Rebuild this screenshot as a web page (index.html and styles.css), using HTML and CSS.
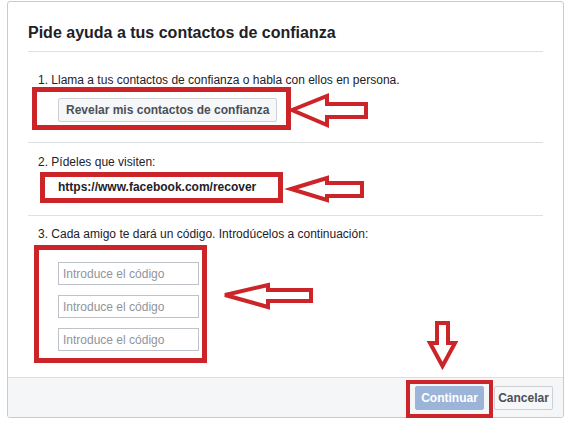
FILE: index.html
```html
<!DOCTYPE html>
<html lang="es">
<head>
<meta charset="utf-8">
<title>Pide ayuda a tus contactos de confianza</title>
<link rel="stylesheet" href="styles.css">
</head>
<body>
<div class="dialog">
  <div class="dialog-header">
    <h2 class="dialog-title">Pide ayuda a tus contactos de confianza</h2>
  </div>
  <div class="dialog-body">
    <div class="step">
      <p class="step-text">1. Llama a tus contactos de confianza o habla con ellos en persona.</p>
      <div class="step-content">
        <button class="btn btn-default" type="button">Revelar mis contactos de confianza</button>
      </div>
    </div>
    <div class="step">
      <p class="step-text">2. Pídeles que visiten:</p>
      <div class="step-content">
        <span class="recover-link">https://www.facebook.com/recover</span>
      </div>
    </div>
    <div class="step step-last">
      <p class="step-text">3. Cada amigo te dará un código. Introdúcelos a continuación:</p>
      <div class="step-content code-list">
        <input class="code-input" type="text" placeholder="Introduce el código">
        <input class="code-input" type="text" placeholder="Introduce el código">
        <input class="code-input" type="text" placeholder="Introduce el código">
      </div>
    </div>
  </div>
  <div class="dialog-footer">
    <button class="btn btn-primary btn-continue" type="button" disabled>Continuar</button>
    <button class="btn btn-default btn-cancel" type="button">Cancelar</button>
  </div>
</div>

<!-- red hand-drawn markers layered over the dialog -->
<svg class="markers" width="571" height="421" viewBox="0 0 571 421" aria-hidden="true">
  <g fill="none" stroke="#cc2529" stroke-width="5">
    <rect x="34.5" y="89.5" width="254" height="38"/>
    <rect x="42.5" y="174.5" width="238" height="26"/>
    <rect x="36.5" y="247.5" width="168" height="113"/>
  </g>
  <rect x="408" y="382" width="83" height="34" fill="none" stroke="#cc2529" stroke-width="4"/>
  <g fill="#fff" stroke="#cc2529" stroke-width="4" stroke-linejoin="miter">
    <polygon points="292,110 327,96 327,104 366,104 366,117 327,117 327,125"/>
    <polygon points="291,189 327,178 327,183 362,183 362,196 327,196 327,200"/>
    <polygon points="225,295 268,285 268,290 311,290 311,301 268,301 268,307"/>
    <polygon points="437,323 448,323 448,343 455,343 442.5,366 430,343 437,343"/>
  </g>
</svg>
</body>
</html>
```

FILE: styles.css
```css
html, body {
  margin: 0;
  padding: 0;
  background: #fff;
}

body {
  font-family: "Liberation Sans", Arial, Helvetica, sans-serif;
  font-size: 12px;
  color: #1d2129;
  width: 571px;
  height: 421px;
  overflow: hidden;
  position: relative;
}

.dialog {
  box-sizing: border-box;
  width: 557px;
  height: 417px;
  margin: 1px 0 0 7px;
  border: 1px solid #c9cbcf;
  border-radius: 3px;
  display: flex;
  flex-direction: column;
  overflow: hidden;
}

.dialog-header {
  margin: 0 20px;
  padding: 21px 0 8px;
  border-bottom: 1px solid #dddfe2;
}

.dialog-title {
  margin: 0;
  font-size: 16px;
  line-height: 20px;
  font-weight: bold;
  color: #1d2129;
}

.dialog-body {
  flex: 1;
  padding-top: 9px;
}

.step {
  margin: 0 20px;
  padding: 11px 10px 20px;
  border-bottom: 1px solid #dddfe2;
}

.step-last {
  border-bottom: 0;
  padding-top: 10px;
}

.step-text {
  margin: 0;
  line-height: 16px;
}

.step-content {
  padding-left: 20px;
  margin-top: 10px;
}

.step:nth-child(2) .step-content {
  margin-top: 9px;
}

.recover-link {
  display: block;
  font-weight: bold;
  line-height: 16px;
}

.code-list {
  margin-top: 20px;
  display: flex;
  flex-direction: column;
  align-items: flex-start;
  gap: 10px;
}

.code-input {
  box-sizing: border-box;
  width: 141px;
  height: 23px;
  margin: 0;
  padding: 0 4px;
  border: 1px solid #bec3c9;
  border-radius: 0;
  font-family: inherit;
  font-size: 12px;
  color: #1d2129;
  background: #fff;
}

.code-input::placeholder {
  color: #90949c;
}

.btn {
  box-sizing: border-box;
  height: 24px;
  margin: 0;
  padding: 0 7px;
  border: 1px solid;
  border-radius: 2px;
  font-family: inherit;
  font-size: 12px;
  font-weight: bold;
  line-height: 22px;
  text-align: center;
  white-space: nowrap;
}

.btn-default {
  background: #f6f7f9;
  border-color: #ced0d4;
  color: #4b4f56;
}

.btn-primary {
  background: #9cb4d8;
  border-color: #9cb4d8;
  color: #fff;
}

.btn-continue {
  width: 69px;
  padding: 0;
}

.btn-cancel {
  width: 59px;
  padding: 0;
}

.dialog-footer {
  display: flex;
  justify-content: flex-end;
  align-items: flex-start;
  gap: 10px;
  height: 40px;
  box-sizing: border-box;
  padding: 8px 10px 0;
  border-top: 1px solid #dddfe2;
  background: #f5f6f7;
}

.markers {
  position: absolute;
  left: 0;
  top: 0;
  pointer-events: none;
}
```
